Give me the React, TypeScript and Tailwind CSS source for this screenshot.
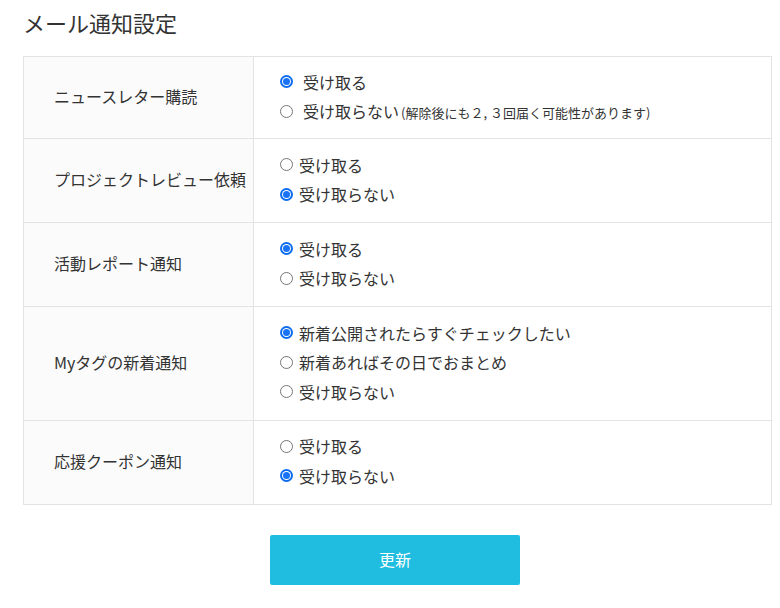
import React, { useState } from 'react';

type Option = { label: string; note?: string };
type Setting = { title: string; options: Option[]; selected: number; wide?: boolean };

const SETTINGS: Setting[] = [
  {
    title: 'ニュースレター購読',
    options: [{ label: '受け取る' }, { label: '受け取らない', note: '(解除後にも２, ３回届く可能性があります)' }],
    selected: 0,
    wide: true,
  },
  { title: 'プロジェクトレビュー依頼', options: [{ label: '受け取る' }, { label: '受け取らない' }], selected: 1 },
  { title: '活動レポート通知', options: [{ label: '受け取る' }, { label: '受け取らない' }], selected: 0 },
  {
    title: 'Myタグの新着通知',
    options: [{ label: '新着公開されたらすぐチェックしたい' }, { label: '新着あればその日でおまとめ' }, { label: '受け取らない' }],
    selected: 0,
  },
  { title: '応援クーポン通知', options: [{ label: '受け取る' }, { label: '受け取らない' }], selected: 1 },
];

const RadioDot: React.FC<{ checked: boolean }> = ({ checked }) =>
  checked ? (
    <span className="w-[13px] h-[13px] rounded-full bg-[#0b6cf0] flex items-center justify-center shrink-0">
      <span className="w-[9px] h-[9px] rounded-full bg-white flex items-center justify-center">
        <span className="w-[7px] h-[7px] rounded-full bg-[#1a73f5]" />
      </span>
    </span>
  ) : (
    <span className="w-[13px] h-[13px] rounded-full border border-[#767676] bg-white shrink-0" />
  );

const App: React.FC = () => {
  const [values, setValues] = useState<number[]>(SETTINGS.map((s) => s.selected));

  return (
    <div className="w-[780px] h-[608px] bg-white text-[#333] [font-family:'Noto_Sans_CJK_JP','Noto_Sans',sans-serif]">
      <div className="pl-[23px] pr-[8px]">
        <h1 className="text-[22px] leading-[28px] pt-[8px] pb-[1px] font-normal">メール通知設定</h1>

        <div className="mt-[19px] border border-[#e3e3e3]">
          {SETTINGS.map((s, i) => (
            <div key={s.title} className={`flex ${i > 0 ? 'border-t border-[#e3e3e3]' : ''}`}>
              <div className="w-[230px] shrink-0 bg-[#fbfbfb] border-r border-[#e3e3e3] flex items-center pl-[30px] pb-[3px] text-[16px]">
                {s.title}
              </div>
              <div className={`flex-1 pl-[26px] ${i === 0 ? 'pt-[10px] pb-[12px]' : 'pt-[11px] pb-[13px]'}`}>
                {s.options.map((o, j) => (
                  <label
                    key={j}
                    className="h-[29.5px] flex items-center cursor-pointer"
                    onClick={() => setValues((v) => v.map((x, k) => (k === i ? j : x)))}
                  >
                    <RadioDot checked={values[i] === j} />
                    <span className={`text-[16px] ${s.wide ? 'ml-[10px]' : 'ml-[6px]'}`}>{o.label}</span>
                    {o.note && <span className="text-[13px] ml-[2px] mt-[2px]">{o.note}</span>}
                  </label>
                ))}
              </div>
            </div>
          ))}
        </div>

        <div className="flex justify-center mt-[30px] pr-[5px]">
          <button className="w-[250px] h-[50px] rounded-[2px] bg-[#20bde0] text-white text-[16px] pb-[2px]">更新</button>
        </div>
      </div>
    </div>
  );
};

export default App;
